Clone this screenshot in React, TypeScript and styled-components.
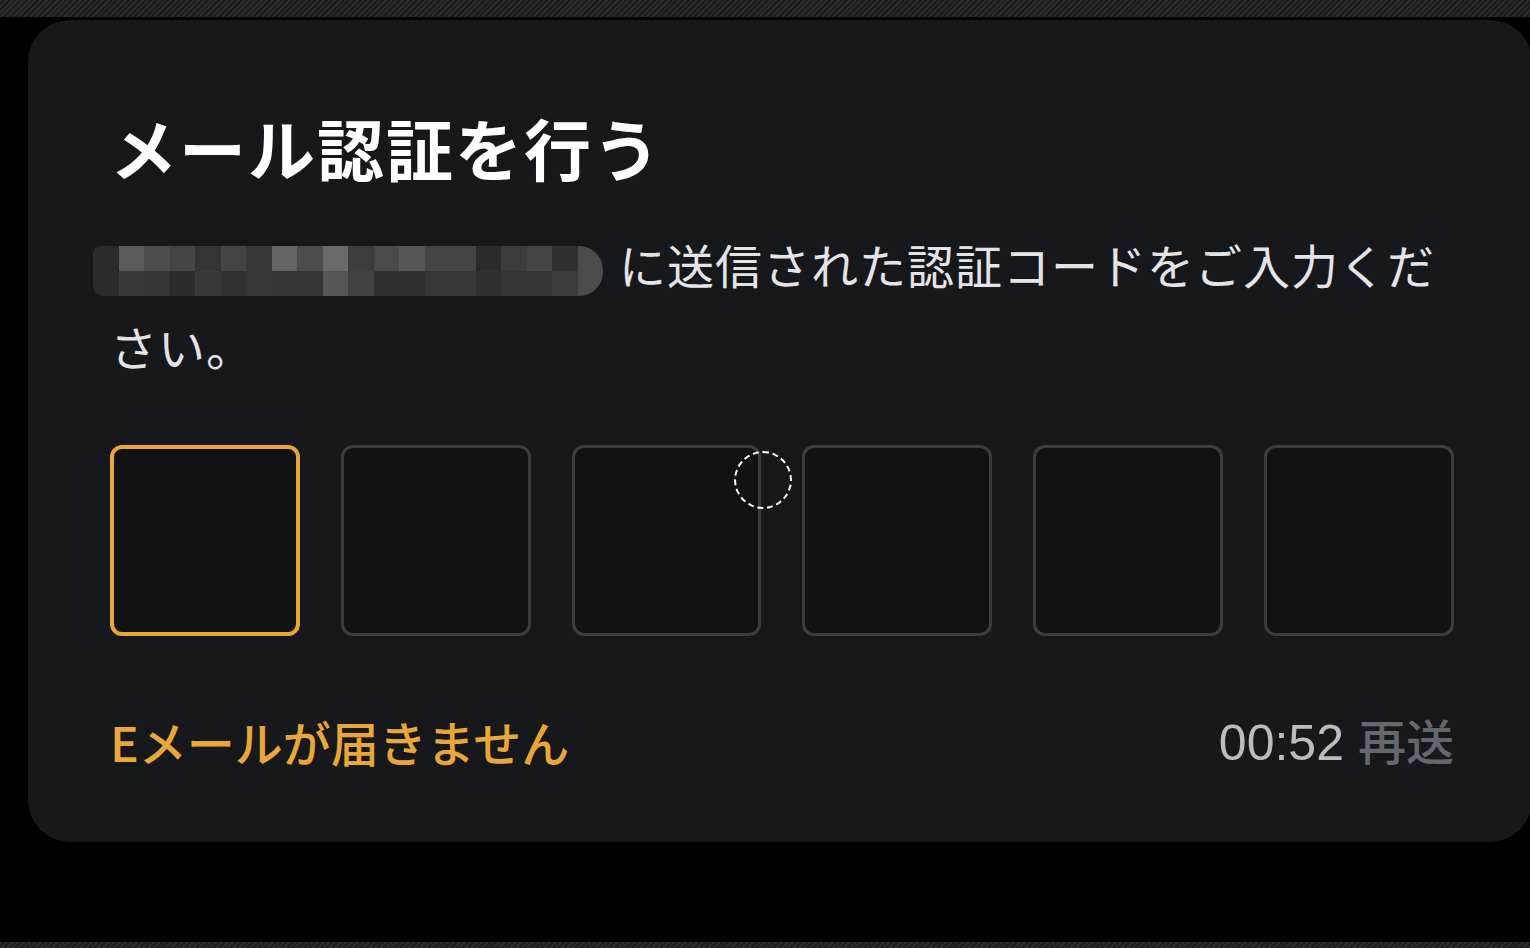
import React from "react";
import styled, { createGlobalStyle } from "styled-components";

const Global = createGlobalStyle`
  html, body { margin: 0; padding: 0; background: #000; }
  body { font-family: "Noto Sans CJK JP", "Noto Sans", sans-serif; overflow: hidden; }
`;

const Page = styled.div`
  width: 1530px;
  height: 948px;
  display: flex;
  flex-direction: column;
  background: #000;
  overflow: hidden;
`;

const Carbon = styled.div<{ $h: number }>`
  flex: none;
  height: ${(p) => p.$h}px;
  background: repeating-linear-gradient(
    135deg,
    #2c2c2c 0px,
    #2c2c2c 2px,
    #1c1c1c 2px,
    #1c1c1c 4px
  );
`;

const Main = styled.div`
  flex: 1;
  padding: 3px 0 0 28px;
`;

const Card = styled.div`
  width: 1504px;
  height: 822px;
  box-sizing: border-box;
  background: #17181c;
  border-radius: 42px;
  padding: 87px 78px 0 82px;
  display: flex;
  flex-direction: column;
  position: relative;
`;

const Title = styled.h1`
  margin: 0;
  font-size: 67px;
  line-height: 80px;
  font-weight: 700;
  color: #ffffff;
  letter-spacing: 2px;
`;

const Desc = styled.p`
  margin: 36px 0 0;
  font-size: 47px;
  line-height: 82px;
  font-weight: 400;
  color: #e4e4e6;
  letter-spacing: 1px;
`;

const MosaicWrap = styled.span`
  display: inline-block;
  overflow: hidden;
  margin-left: -17px;
  margin-right: 16px;
  vertical-align: -12px;
  border-radius: 8px 24px 24px 10px;
  filter: blur(0.5px);
`;

const MosaicGrid = styled.span`
  display: grid;
  grid-template-columns: repeat(20, 25.5px);
  grid-template-rows: 25px 25px;
`;

const Cell = styled.span<{ $c: string }>`
  background: ${(p) => p.$c};
`;

const Codes = styled.div`
  margin-top: 58px;
  display: flex;
  gap: 41px;
`;

const CodeBox = styled.div<{ $active?: boolean }>`
  width: 190px;
  height: 191px;
  box-sizing: border-box;
  background: #121212;
  border-radius: 12px;
  border: ${(p) => (p.$active ? "4px solid #e9a73a" : "3px solid #3c3d40")};
`;

const TouchRing = styled.div`
  position: absolute;
  left: 706px;
  top: 431px;
  width: 58px;
  height: 58px;
  border-radius: 50%;
  border: 2px dashed #ffffff;
  box-sizing: border-box;
`;

const Footer = styled.div`
  margin-top: 75px;
  display: flex;
  justify-content: space-between;
  align-items: center;
  font-size: 48px;
  line-height: 56px;
`;

const NoMail = styled.span`
  color: #e9a73a;
  font-weight: 500;
`;

const Timer = styled.span`
  color: #b9bcc2;
  font-family: "Liberation Sans", "Noto Sans", sans-serif;
  font-weight: 400;
  font-size: 50px;
`;

const Resend = styled.span`
  color: #64676c;
  font-weight: 500;
  margin-left: 14px;
`;

const top = ["#2a2b2f", "#5a5b5e", "#4b4c4f", "#434446", "#333436", "#434446", "#37383b", "#636466", "#4b4c4e", "#69696b", "#3c3d40", "#48494b", "#555658", "#444547", "#444547", "#2a2b2e", "#3a3b3d", "#444546", "#2e2f32", "#4a4b4d"];
const bottom = ["#2a2b2f", "#38393b", "#333436", "#2b2c2e", "#38393b", "#313234", "#36373a", "#333437", "#333437", "#555658", "#404144", "#2f3033", "#2f3033", "#36373a", "#36373a", "#2f3033", "#333436", "#333437", "#3a3b3d", "#4a4b4d"];

export default function App() {
  return (
    <Page>
      <Global />
      <Carbon $h={17} />
      <Main>
        <Card>
          <Title>メール認証を行う</Title>
          <Desc>
            <MosaicWrap>
              <MosaicGrid>
                {[...top, ...bottom].map((c, i) => (
                  <Cell key={i} $c={c} />
                ))}
              </MosaicGrid>
            </MosaicWrap>
            に送信された認証コードをご入力ください。
          </Desc>
          <Codes>
            <CodeBox $active />
            <CodeBox />
            <CodeBox />
            <CodeBox />
            <CodeBox />
            <CodeBox />
          </Codes>
          <TouchRing />
          <Footer>
            <NoMail>Eメールが届きません</NoMail>
            <span>
              <Timer>00:52</Timer>
              <Resend>再送</Resend>
            </span>
          </Footer>
        </Card>
      </Main>
      <Carbon $h={6} />
    </Page>
  );
}
